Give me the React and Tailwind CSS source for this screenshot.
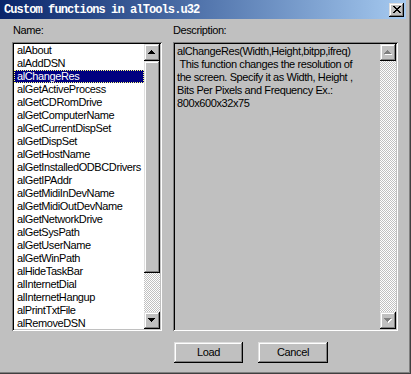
import React from 'react'

const items = [
  'alAbout',
  'alAddDSN',
  'alChangeRes',
  'alGetActiveProcess',
  'alGetCDRomDrive',
  'alGetComputerName',
  'alGetCurrentDispSet',
  'alGetDispSet',
  'alGetHostName',
  'alGetInstalledODBCDrivers',
  'alGetIPAddr',
  'alGetMidiInDevName',
  'alGetMidiOutDevName',
  'alGetNetworkDrive',
  'alGetSysPath',
  'alGetUserName',
  'alGetWinPath',
  'alHideTaskBar',
  'alInternetDial',
  'alInternetHangup',
  'alPrintTxtFile',
  'alRemoveDSN',
]

const descLines = [
  'alChangeRes(Width,Height,bitpp,ifreq)',
  ' This function changes the resolution of',
  'the screen. Specify it as Width, Height ,',
  'Bits Per Pixels and Frequency Ex.:',
  '800x600x32x75',
]

const raised =
  'bg-[#c0c0c0] shadow-[inset_-1px_-1px_0_#000,inset_1px_1px_0_#dfdfdf,inset_-2px_-2px_0_#808080,inset_2px_2px_0_#fff]'
const sunken =
  'p-[2px] shadow-[inset_1px_1px_0_#808080,inset_-1px_-1px_0_#fff,inset_2px_2px_0_#000,inset_-2px_-2px_0_#c0c0c0]'
const checker =
  'bg-[repeating-conic-gradient(#c0c0c0_0_25%,#fff_0_50%)] bg-[length:2px_2px]'

// pixel triangle, 7x4
const Arrow = ({ down, disabled }) => {
  const rows = [
    [3, 1],
    [2, 3],
    [1, 5],
    [0, 7],
  ]
  const r = down ? [...rows].reverse() : rows
  return (
    <svg width="8" height="5" viewBox="0 0 8 5" shapeRendering="crispEdges">
      {disabled &&
        r.map(([x, w], i) => <rect key={'s' + i} x={x + 1} y={i + 1} width={w} height="1" fill="#fff" />)}
      {r.map(([x, w], i) => (
        <rect key={i} x={x} y={i} width={w} height="1" fill={disabled ? '#808080' : '#000'} />
      ))}
    </svg>
  )
}

const ScrollBtn = ({ down, disabled }) => (
  <div className={`h-[17px] w-full flex items-center justify-center ${raised}`}>
    <Arrow down={down} disabled={disabled} />
  </div>
)

const CloseGlyph = () => {
  const rows = [
    [[0, 2], [6, 2]],
    [[1, 2], [5, 2]],
    [[2, 4]],
    [[3, 2]],
    [[2, 4]],
    [[1, 2], [5, 2]],
    [[0, 2], [6, 2]],
  ]
  return (
    <svg width="8" height="7" viewBox="0 0 8 7" shapeRendering="crispEdges">
      {rows.map((segs, y) =>
        segs.map(([x, w], j) => <rect key={y + '-' + j} x={x} y={y} width={w} height="1" fill="#000" />)
      )}
    </svg>
  )
}

export default function App() {
  return (
    <div className="w-[411px] h-[374px] bg-[#c0c0c0] flex flex-col pr-[5px] shadow-[inset_-1px_-1px_0_#404040,inset_-2px_-2px_0_#808080] text-black font-[family-name:'Liberation_Sans',Arial,sans-serif]">
      {/* Title bar */}
      <div className="h-[19px] flex items-center justify-between pl-[4px] pr-[2px] bg-linear-to-r from-[#0a246a] to-[#a6caf0]">
        <span className="text-white text-[12px] font-mono font-bold tracking-[-0.9px] leading-none whitespace-pre">
          Custom functions in alTools.u32
        </span>
        <div className={`w-[15px] h-[14px] flex items-center justify-center ${raised}`}>
          <CloseGlyph />
        </div>
      </div>

      <div className="flex gap-[11px] pl-[12px] pt-[5px] text-[11px] tracking-[-0.4px] leading-[13px]">
        {/* Name column */}
        <div className="flex flex-col w-[150px]">
          <div className="pl-[1px] mb-[5px]">Name:</div>
          <div className={`h-[289px] bg-white flex ${sunken}`}>
            <div className="flex-1 overflow-hidden">
              {items.map((it) => (
                <div
                  key={it}
                  className={`h-[13px] pl-[3px] whitespace-nowrap ${
                    it === 'alChangeRes'
                      ? 'bg-[#000080] text-white outline-1 outline-dotted outline-[#ffff80] -outline-offset-1'
                      : ''
                  }`}
                >
                  {it}
                </div>
              ))}
            </div>
            <div className="w-[16px] flex flex-col">
              <ScrollBtn />
              <div className={`h-[212px] ${raised}`} />
              <div className={`flex-1 ${checker}`} />
              <ScrollBtn down />
            </div>
          </div>
        </div>

        {/* Description column */}
        <div className="flex flex-col w-[225px]">
          <div className="mb-[5px]">Description:</div>
          <div className={`h-[289px] bg-[#c0c0c0] flex ${sunken}`}>
            <div className="flex-1 pl-[2px] pt-[1px] overflow-hidden">
              {descLines.map((l, i) => (
                <div key={i} className="h-[13px] whitespace-pre">
                  {l}
                </div>
              ))}
            </div>
            <div className="w-[16px] flex flex-col">
              <ScrollBtn disabled />
              <div className={`flex-1 ${checker}`} />
              <ScrollBtn down disabled />
            </div>
          </div>
          <div className="flex gap-[15px] mt-[11px] pl-[1px]">
            <button className={`w-[69px] h-[21px] flex items-center justify-center ${raised}`}>Load</button>
            <button className={`w-[70px] h-[21px] flex items-center justify-center ${raised}`}>Cancel</button>
          </div>
        </div>
      </div>
    </div>
  )
}
